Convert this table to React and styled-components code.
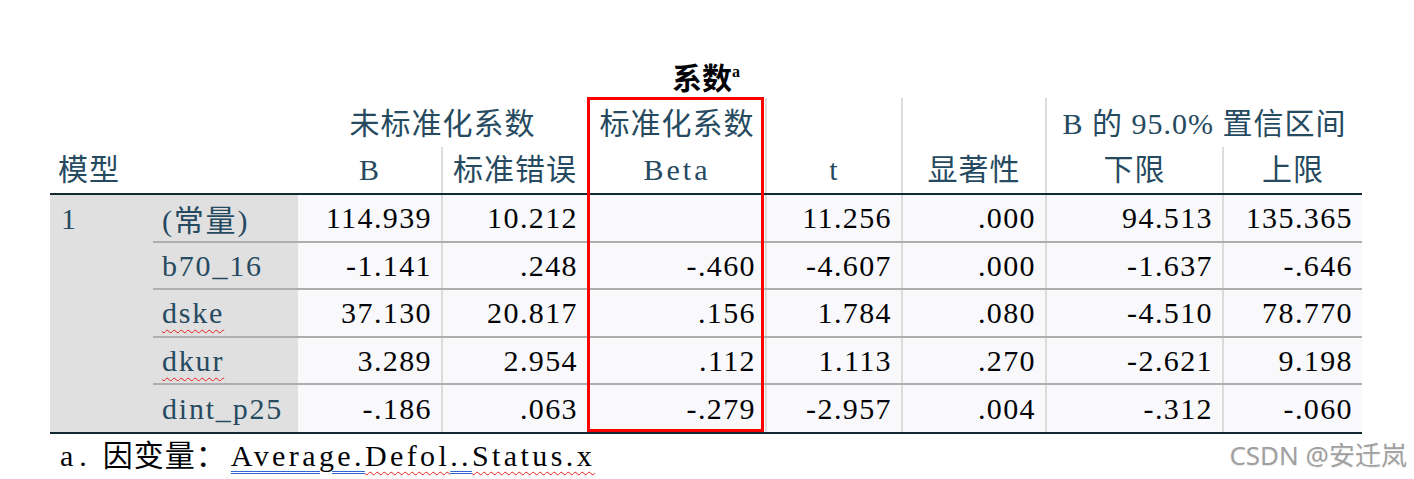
import React from 'react';
import styled, { createGlobalStyle } from 'styled-components';

//===============================================
//Data
//===============================================
const widths = [103, 145, 144, 146, 178, 136, 144, 177, 139];

const rows = [
  { name: '(常量)', h: 48, v: ['114.939', '10.212', '', '11.256', '.000', '94.513', '135.365'] },
  { name: 'b70_16', h: 47, v: ['-1.141', '.248', '-.460', '-4.607', '.000', '-1.637', '-.646'] },
  { name: 'dske', h: 48, squiggle: true, v: ['37.130', '20.817', '.156', '1.784', '.080', '-4.510', '78.770'] },
  { name: 'dkur', h: 47, squiggle: true, v: ['3.289', '2.954', '.112', '1.113', '.270', '-2.621', '9.198'] },
  { name: 'dint_p25', h: 49, v: ['-.186', '.063', '-.279', '-2.957', '.004', '-.312', '-.060'] },
];

const SERIF = `"Liberation Serif", "Noto Sans CJK SC", serif`;

//===============================================
//Styled Components
//===============================================
const GlobalStyle = createGlobalStyle`
  html, body {
    margin: 0;
    padding: 0;
    background: #ffffff;
  }
`;

const Page = styled.div`
  position: relative;
  width: 1414px;
  height: 479px;
  box-sizing: border-box;
  padding: 60px 0 0 50px;
  font-family: ${SERIF};
  overflow: hidden;
`;

const Title = styled.div`
  width: 1312px;
  height: 38px;
  line-height: 38px;
  text-align: center;
  font-size: 30px;
  font-weight: 700;
  color: #010205;

  sup {
    font-family: "Liberation Serif", serif;
    font-size: 16px;
    vertical-align: 12px;
    line-height: 0;
  }
`;

const TableWrap = styled.div`
  position: relative;
  width: 1312px;
`;

const Table = styled.table`
  border-collapse: collapse;
  table-layout: fixed;
  width: 1312px;
  font-size: 30px;
  letter-spacing: 1px;
`;

const Col = styled.col`
  width: ${p => p.$w}px;
`;

const HeadRow = styled.tr`
  height: ${p => p.$h}px;
`;

const HeadCell = styled.th`
  padding: ${p => (p.$left ? '0 0 0 8px' : '0')};
  font-weight: 400;
  color: #264a60;
  line-height: 46px;
  white-space: nowrap;
  vertical-align: bottom;
  text-align: ${p => (p.$left ? 'left' : 'center')};
  border-right: ${p => (p.$divider ? '2px solid #dcdcdc' : 'none')};
  border-bottom: ${p => (p.$last ? '2px solid #152935' : 'none')};
`;

const Wide = styled.span`
  letter-spacing: 3px;
`;

const BodyRow = styled.tr`
  height: ${p => p.$h}px;
`;

const ModelCell = styled.td`
  padding: 0 0 0 11px;
  vertical-align: top;
  line-height: 48px;
  color: #264a60;
  background: #e0e0e0;
  border-bottom: 2px solid #152935;
`;

const LabelCell = styled.td`
  padding: 0 0 0 9px;
  color: #264a60;
  background: #e0e0e0;
  letter-spacing: 1.8px;
  white-space: nowrap;
  border-bottom: 2px solid ${p => (p.$last ? '#152935' : '#aeaeae')};
`;

const Squiggle = styled.span`
  text-decoration: underline wavy #e0201a;
  text-decoration-thickness: 1px;
  text-underline-offset: 6px;
`;

const ValueCell = styled.td`
  padding: 0 9px 0 0;
  text-align: right;
  color: #010205;
  background: #f9f9fb;
  letter-spacing: 1.4px;
  white-space: nowrap;
  border-bottom: 2px solid ${p => (p.$last ? '#152935' : '#aeaeae')};
  border-right: ${p => (p.$end ? 'none' : '2px solid #dcdcdc')};
`;

const Highlight = styled.div`
  position: absolute;
  left: 537px;
  top: -1px;
  width: 177px;
  height: 335px;
  box-sizing: border-box;
  border: 3px solid #ff0000;
  pointer-events: none;
`;

const Footnote = styled.div`
  margin-top: 4px;
  padding-left: 10px;
  font-size: 30px;
  line-height: 36px;
  letter-spacing: 1px;
  color: #010205;
  white-space: nowrap;
`;

const Marker = styled.span`
  letter-spacing: 6px;
  margin-right: 10px;
`;

const Variable = styled.span`
  margin-left: 4px;
  letter-spacing: 3.4px;
`;

const BlueLine = styled.span`
  text-decoration: underline double #2f66d0;
  text-decoration-thickness: 1px;
  text-underline-offset: 5px;
`;

const RedWave = styled.span`
  text-decoration: underline wavy #e0201a;
  text-decoration-thickness: 1px;
  text-underline-offset: 5px;
`;

const Watermark = styled.div`
  position: absolute;
  right: 7px;
  top: 438px;
  font-family: "Noto Sans", "Noto Sans CJK SC", sans-serif;
  font-size: 26px;
  line-height: 34px;
  color: #a0a0a0;
  text-shadow: 0 0 1px #ffffff, 0 1px 1px #e6e6e6;
`;

//===============================================
//Component
//===============================================
export default function App() {
  return (
    <Page>
      <GlobalStyle />
      <Title>系数<sup>a</sup></Title>
      <TableWrap>
        <Table>
          <colgroup>
            {widths.map((w, i) => <Col key={i} $w={w} />)}
          </colgroup>
          <thead>
            <HeadRow $h={49}>
              <HeadCell colSpan={2} />
              <HeadCell colSpan={2} $divider>未标准化系数</HeadCell>
              <HeadCell $divider>标准化系数</HeadCell>
              <HeadCell rowSpan={2} $divider $last>t</HeadCell>
              <HeadCell rowSpan={2} $divider $last>显著性</HeadCell>
              <HeadCell colSpan={2}>B 的 95.0% 置信区间</HeadCell>
            </HeadRow>
            <HeadRow $h={46}>
              <HeadCell colSpan={2} $left $last>模型</HeadCell>
              <HeadCell $divider $last>B</HeadCell>
              <HeadCell $divider $last>标准错误</HeadCell>
              <HeadCell $divider $last><Wide>Beta</Wide></HeadCell>
              <HeadCell $divider $last>下限</HeadCell>
              <HeadCell $last>上限</HeadCell>
            </HeadRow>
          </thead>
          <tbody>
            {rows.map((row, r) => {
              const last = r === rows.length - 1;
              return (
                <BodyRow key={row.name} $h={row.h}>
                  {r === 0 && <ModelCell rowSpan={rows.length}>1</ModelCell>}
                  <LabelCell $last={last}>
                    {row.squiggle ? <Squiggle>{row.name}</Squiggle> : row.name}
                  </LabelCell>
                  {row.v.map((val, c) => (
                    <ValueCell key={c} $last={last} $end={c === row.v.length - 1}>{val}</ValueCell>
                  ))}
                </BodyRow>
              );
            })}
          </tbody>
        </Table>
        <Highlight />
      </TableWrap>
      <Footnote>
        <Marker>a.</Marker>因变量：<Variable><BlueLine>Average.</BlueLine><RedWave>Defol</RedWave><BlueLine>..</BlueLine><RedWave>Status.x</RedWave></Variable>
      </Footnote>
      <Watermark>CSDN @安迁岚</Watermark>
    </Page>
  );
}
